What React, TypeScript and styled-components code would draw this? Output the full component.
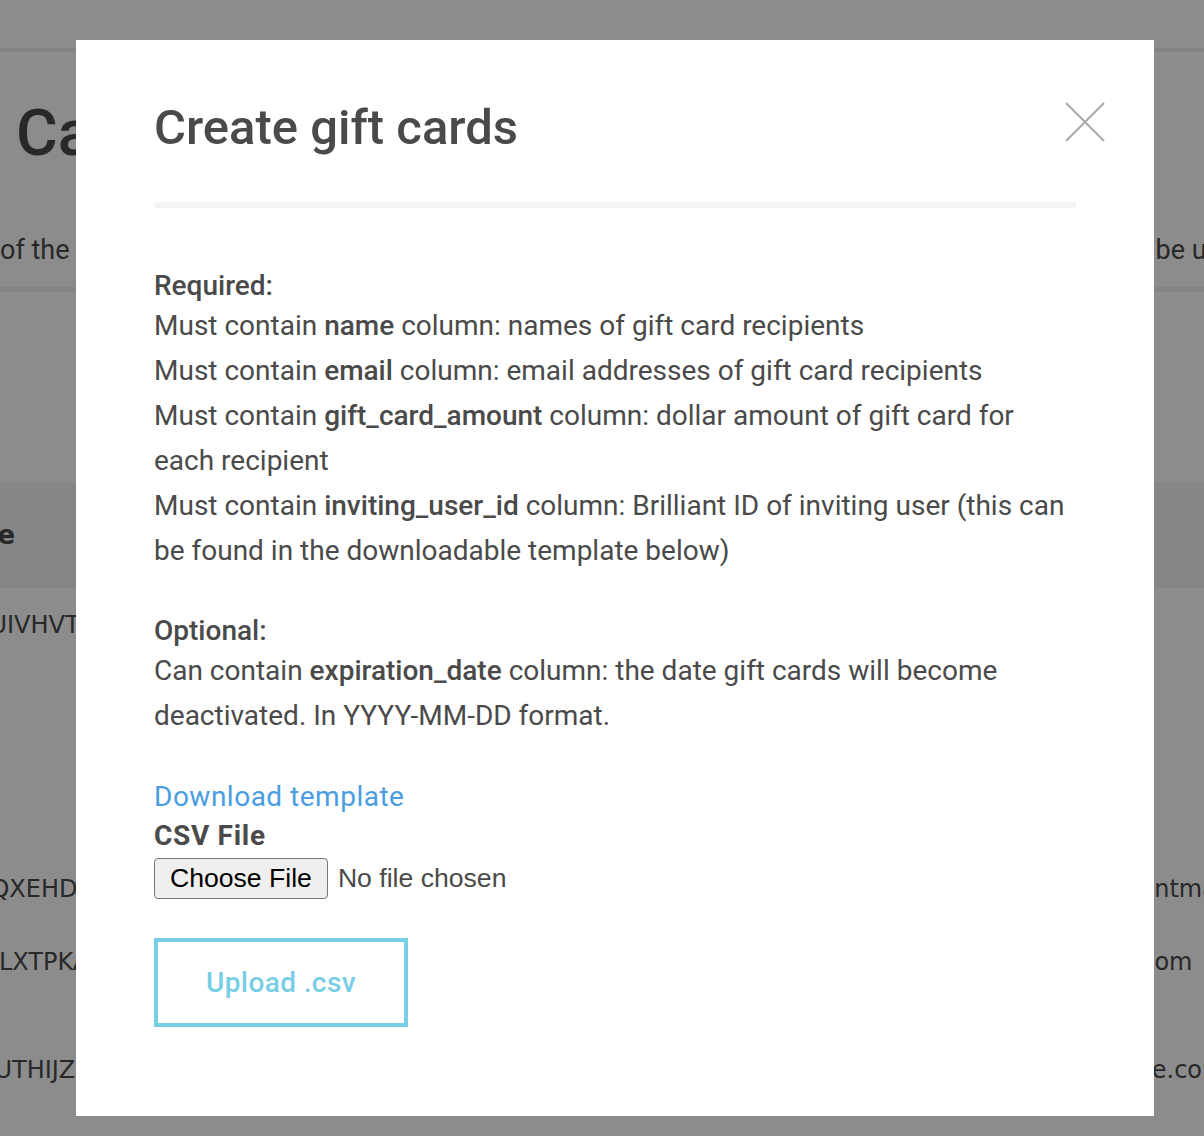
import React from 'react';
import styled, { createGlobalStyle } from 'styled-components';

type CardRow = {
  code: string;
  name: string;
  amount: string;
  email: string;
  height: number;
};

const rows: CardRow[] = [
  { code: 'XK7UIVHVT', name: 'Kim Nguyen', amount: '$25.00', email: 'kim@brilliant.org', height: 264 },
  { code: 'RB2QXEHDM', name: 'Tommie Hales', amount: '$50.00', email: 'tommie.hales@brilliantmath.com', height: 73 },
  { code: 'WN9LXTPKA', name: 'Hanna Lewis', amount: '$50.00', email: 'hanna.lewis@gmail.com', height: 108 },
  { code: 'MB4UTHIJZ', name: 'Samuel Ruiz', amount: '$100.00', email: 'samuel.ruiz@example.com', height: 108 },
];

const GlobalStyle = createGlobalStyle`
  html, body {
    margin: 0;
    padding: 0;
  }
  body {
    font-family: Roboto, "Noto Sans", sans-serif;
    background: #ffffff;
    overflow: hidden;
  }
`;

export default function App() {
  return (
    <>
      <GlobalStyle />
      <Page>
        <TopBar />
        <PageTitle>Cards</PageTitle>
        <Description>
          of the gift card codes that have been issued to your organization. Each unique gift code can only be
          used once.
        </Description>
        <Table>
          <HeadRow>
            <HeadCell>Code</HeadCell>
            <HeadCell>Name</HeadCell>
            <HeadCell>Amount</HeadCell>
            <HeadCell>Email</HeadCell>
          </HeadRow>
          {rows.map((row) => (
            <BodyRow key={row.code} $height={row.height}>
              <CodeCell>{row.code}</CodeCell>
              <CodeCell>{row.name}</CodeCell>
              <CodeCell>{row.amount}</CodeCell>
              <CodeCell>{row.email}</CodeCell>
            </BodyRow>
          ))}
        </Table>
      </Page>

      <Overlay>
        <Modal>
          <CloseButton aria-label="Close">
            <svg width="40" height="40" viewBox="0 0 40 40">
              <path d="M1 1 L39 39 M39 1 L1 39" stroke="#a9a9a9" strokeWidth="2" fill="none" />
            </svg>
          </CloseButton>
          <ModalTitle>Create gift cards</ModalTitle>
          <Divider />

          <SectionLabel>Required:</SectionLabel>
          <Rule>Must contain <b>name</b> column: names of gift card recipients</Rule>
          <Rule>Must contain <b>email</b> column: email addresses of gift card recipients</Rule>
          <Rule>
            Must contain <b>gift_card_amount</b> column: dollar amount of gift card for each recipient
          </Rule>
          <Rule>
            Must contain <b>inviting_user_id</b> column: Brilliant ID of inviting user (this can be found
            in the downloadable template below)
          </Rule>

          <SectionLabel $gap={40}>Optional:</SectionLabel>
          <Rule>
            Can contain <b>expiration_date</b> column: the date gift cards will become deactivated. In
            YYYY-MM-DD format.
          </Rule>

          <TemplateLink href="#">Download template</TemplateLink>
          <FieldLabel htmlFor="csv-file">CSV File</FieldLabel>
          <FileRow>
            <FileButton>
              Choose File
              <HiddenInput id="csv-file" type="file" accept=".csv" />
            </FileButton>
            <FileStatus>No file chosen</FileStatus>
          </FileRow>

          <UploadButton type="button">Upload .csv</UploadButton>
        </Modal>
      </Overlay>
    </>
  );
}

/* page behind the dialog */

const Page = styled.div`
  width: 1204px;
  height: 1136px;
  overflow: hidden;
  color: #4a4a4a;
`;

const TopBar = styled.header`
  height: 48px;
  border-bottom: 4px solid #eeeeee;
`;

const PageTitle = styled.h1`
  margin: 0;
  padding: 43px 16px 0;
  font-size: 64px;
  font-weight: 500;
  line-height: 77px;
`;

const Description = styled.p`
  margin: 56px 0 0;
  padding-bottom: 14px;
  border-bottom: 5px solid #f0f0f0;
  font-size: 27px;
  line-height: 45px;
  white-space: nowrap;
  overflow: hidden;
`;

const Table = styled.div`
  margin: 190px 0 0 -58px;
  display: flex;
  flex-direction: column;
`;

const HeadRow = styled.div`
  display: grid;
  grid-template-columns: 260px 340px 358px 1fr;
  align-items: center;
  height: 106px;
  background: #f4f4f4;
`;

const HeadCell = styled.div`
  font-family: "DejaVu Sans", sans-serif;
  font-size: 26px;
  font-weight: 700;
  white-space: nowrap;
`;

const BodyRow = styled.div<{ $height: number }>`
  display: grid;
  grid-template-columns: 260px 340px 358px 1fr;
  align-items: start;
  height: ${(p) => p.$height}px;
  padding-top: 22px;
  box-sizing: border-box;
`;

const CodeCell = styled.div`
  font-family: "DejaVu Sans", sans-serif;
  font-size: 24px;
  line-height: 30px;
  white-space: nowrap;
`;

/* dialog */

const Overlay = styled.div`
  position: fixed;
  inset: 0;
  background: rgba(0, 0, 0, 0.45);
  padding: 40px 0 0 76px;
`;

const Modal = styled.div`
  position: relative;
  width: 1078px;
  box-sizing: border-box;
  background: #ffffff;
  padding: 59px 78px 89px;
  color: #4a4a4a;
  display: flex;
  flex-direction: column;
  align-items: flex-start;
`;

const CloseButton = styled.button`
  position: absolute;
  top: 62px;
  right: 49px;
  width: 40px;
  height: 40px;
  padding: 0;
  border: none;
  background: none;
  cursor: pointer;

  svg {
    display: block;
  }
`;

const ModalTitle = styled.h2`
  margin: 0;
  font-size: 49px;
  font-weight: 500;
  line-height: 58px;
`;

const Divider = styled.hr`
  align-self: stretch;
  margin: 45px 0 0;
  height: 6px;
  border: none;
  background: #f4f4f4;
`;

const SectionLabel = styled.div<{ $gap?: number }>`
  margin-top: ${(p) => p.$gap ?? 60}px;
  font-size: 28px;
  font-weight: 500;
  line-height: 35px;
`;

const Rule = styled.p`
  margin: 0;
  max-width: 915px;
  font-size: 28px;
  line-height: 45px;

  b {
    font-weight: 500;
  }
`;

const TemplateLink = styled.a`
  margin-top: 39px;
  font-size: 28px;
  line-height: 39px;
  letter-spacing: 0.5px;
  color: #4a9de3;
  text-decoration: none;
`;

const FieldLabel = styled.label`
  font-size: 28px;
  font-weight: 700;
  line-height: 39px;
  letter-spacing: 0.7px;
`;

const FileRow = styled.div`
  margin-top: 3px;
  display: flex;
  align-items: center;
  gap: 10px;
`;

const FileButton = styled.label`
  height: 41px;
  box-sizing: border-box;
  padding: 0 15px;
  display: flex;
  align-items: center;
  border: 1px solid #767676;
  border-radius: 4px;
  background: #efefef;
  font-family: "Liberation Sans", Arial, sans-serif;
  font-size: 26.6px;
  color: #000000;
  cursor: pointer;
`;

const HiddenInput = styled.input`
  display: none;
`;

const FileStatus = styled.span`
  font-family: "Liberation Sans", Arial, sans-serif;
  font-size: 26.6px;
  color: #4a4a4a;
`;

const UploadButton = styled.button`
  margin-top: 39px;
  width: 254px;
  height: 89px;
  border: 4px solid #78cee4;
  background: #ffffff;
  color: #78cee4;
  font-family: Roboto, sans-serif;
  font-size: 28px;
  font-weight: 500;
  letter-spacing: 0.4px;
  cursor: pointer;
`;
